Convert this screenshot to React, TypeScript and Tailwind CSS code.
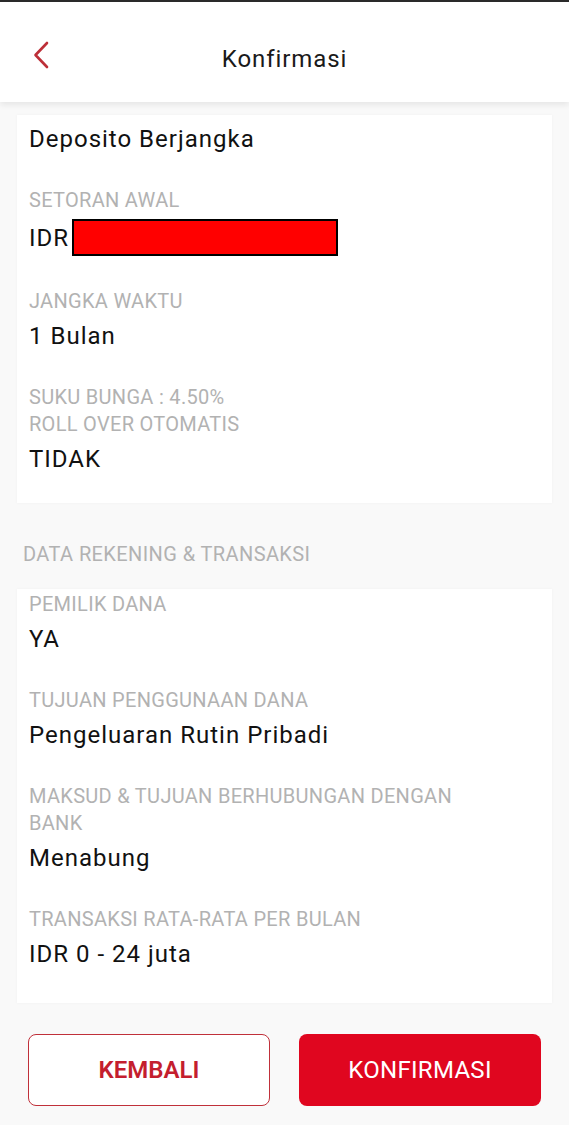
import { ReactNode } from 'react';

interface Item {
  label?: string[];
  value: ReactNode;
}

const DEPOSITO: Item[] = [
  { value: 'Deposito Berjangka' },
  {
    label: ['SETORAN AWAL'],
    value: (
      <span className="flex items-center">
        IDR
        <span className="ml-[3px] inline-block h-[37px] w-[266px] border-2 border-black bg-[#ff0000]" />
      </span>
    ),
  },
  { label: ['JANGKA WAKTU'], value: '1 Bulan' },
  { label: ['SUKU BUNGA : 4.50%', 'ROLL OVER OTOMATIS'], value: 'TIDAK' },
];

const REKENING: Item[] = [
  { label: ['PEMILIK DANA'], value: 'YA' },
  { label: ['TUJUAN PENGGUNAAN DANA'], value: 'Pengeluaran Rutin Pribadi' },
  { label: ['MAKSUD & TUJUAN BERHUBUNGAN DENGAN', 'BANK'], value: 'Menabung' },
  { label: ['TRANSAKSI RATA-RATA PER BULAN'], value: 'IDR 0 - 24 juta' },
];

function Field({ item, first }: { item: Item; first: boolean }) {
  return (
    <div className={first ? '' : 'mt-[32px]'}>
      {item.label?.map((l) => (
        <div key={l} className="text-[20px] leading-[26px] tracking-[0.3px] text-[#b2b2b2] first:[&:not(:last-child)]:mb-[1px]">
          {l}
        </div>
      ))}
      <div className={`text-[24px] leading-[32px] tracking-[1px] text-[#111] ${item.label ? 'mt-[6px]' : ''}`}>
        {item.value}
      </div>
    </div>
  );
}

function Card({ items, className }: { items: Item[]; className: string }) {
  return (
    <div className={`mx-[17px] bg-white px-[12px] shadow-[0_0_3px_rgba(0,0,0,0.04)] ${className}`}>
      {items.map((it, i) => (
        <Field key={i} item={it} first={i === 0} />
      ))}
    </div>
  );
}

export default function App() {
  return (
    <div className="flex h-[1125px] w-[569px] flex-col overflow-hidden bg-[#f9f9f9] font-['Roboto',sans-serif]">
      <div className="h-[2px] bg-[#2b2b2b]" />
      {/* header */}
      <div className="relative z-10 flex h-[100px] items-center justify-center bg-white shadow-[0_3px_6px_rgba(0,0,0,0.08)]">
        <button className="absolute left-[32px] top-[38px]" aria-label="Kembali">
          <svg width="18" height="30" viewBox="0 0 18 30" fill="none">
            <path d="M15 3 L3.5 15 L15 27" stroke="#bd2f38" strokeWidth="2.6" strokeLinecap="round" strokeLinejoin="round" />
          </svg>
        </button>
        <div className="mt-[14px] text-[24px] tracking-[0.9px] text-[#1a1a1a]">Konfirmasi</div>
      </div>

      <Card items={DEPOSITO} className="mt-[13px] pt-[8px] pb-[28px]" />

      <div className="mt-[38px] px-[23px] text-[20px] leading-[26px] tracking-[0.4px] text-[#b2b2b2]">
        DATA REKENING &amp; TRANSAKSI
      </div>

      <Card items={REKENING} className="mt-[22px] pt-[2px] pb-[33px]" />

      <div className="mt-[31px] flex gap-[29px] px-[28px]">
        <button className="flex h-[72px] w-[242px] items-center justify-center rounded-[8px] border-[1.5px] border-[#c0303a] bg-white text-[24px] font-semibold text-[#c41e2e]">
          KEMBALI
        </button>
        <button className="flex h-[72px] w-[242px] items-center justify-center rounded-[8px] bg-[#e0061f] text-[24px] font-normal tracking-[0.3px] text-white">
          KONFIRMASI
        </button>
      </div>
    </div>
  );
}
